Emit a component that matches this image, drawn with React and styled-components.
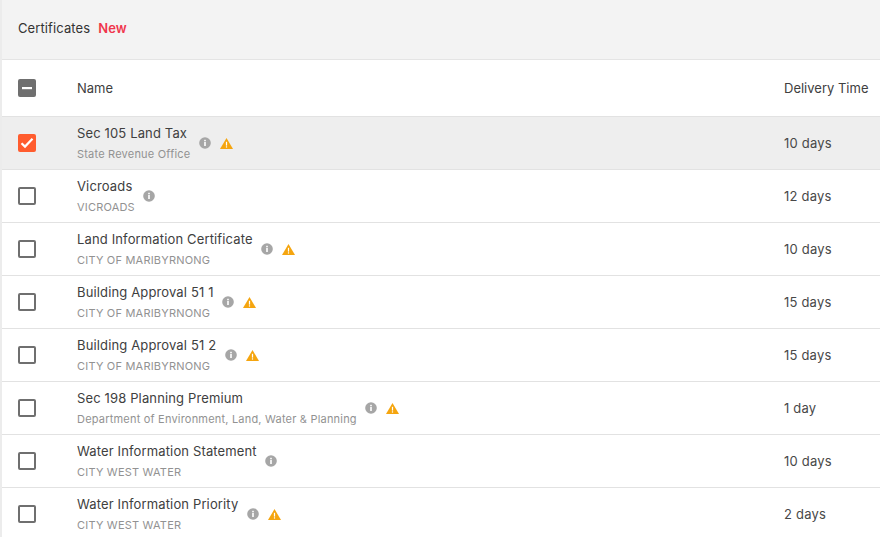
import React from 'react';
import styled, { createGlobalStyle } from 'styled-components';

const GlobalStyle = createGlobalStyle`
  html, body {
    margin: 0;
    padding: 0;
    height: 537px;
    overflow: hidden;
    background: #fff;
    font-family: Inter, "Liberation Sans", sans-serif;
  }
`;

const Panel = styled.div`
  width: 880px;
  height: 537px;
  overflow: hidden;
  box-sizing: border-box;
  border-left: 2px solid #ececec;
  color: #333;
`;

const TitleBar = styled.div`
  height: 60px;
  box-sizing: border-box;
  display: flex;
  align-items: center;
  gap: 8px;
  padding: 0 0 3px 16px;
  background: #f3f3f3;
  border-bottom: 1px solid #e4e4e4;
  font-size: 13px;
  letter-spacing: 0.1px;
`;

const NewLabel = styled.span`
  color: #f0364c;
  font-weight: 600;
`;

const Row = styled.div`
  height: 53px;
  box-sizing: border-box;
  display: grid;
  grid-template-columns: 59px 707px 1fr;
  align-items: center;
  padding-left: 16px;
  background: ${(p) => (p.$selected ? '#eeeeee' : '#fff')};
  border-bottom: 1px solid #e2e2e2;
`;

const HeaderRow = styled(Row)`
  height: 57px;
  font-size: 13px;
  color: #404040;
`;

const Box = styled.div`
  width: 18px;
  height: 18px;
  box-sizing: border-box;
  border-radius: 2px;
  display: flex;
  align-items: center;
  justify-content: center;
  background: ${(p) => p.$fill || '#fff'};
  border: 2px solid ${(p) => p.$fill || '#6f6f6f'};
`;

const NameCell = styled.div`
  display: flex;
  align-items: center;
  gap: 8.5px;
`;

const Names = styled.div`
  display: flex;
  flex-direction: column;
  gap: 6px;
`;

const Title = styled.div`
  font-size: 13px;
  line-height: 16px;
  letter-spacing: 0.14px;
  color: #404040;
`;

const Sub = styled.div`
  font-size: 11px;
  line-height: 14px;
  letter-spacing: 0.2px;
  color: #929292;
`;

const Icons = styled.div`
  display: flex;
  align-items: center;
  gap: 9px;
`;

const Time = styled.div`
  font-size: 13px;
  letter-spacing: 0.2px;
  color: #484848;
`;

const InfoIcon = () => (
  <svg width="12" height="12" viewBox="0 0 12 12">
    <circle cx="6" cy="6" r="5.8" fill="#a6a6a6" />
    <rect x="5.2" y="5" width="1.6" height="4" fill="#fff" />
    <rect x="5.2" y="2.8" width="1.6" height="1.5" fill="#fff" />
  </svg>
);

const WarnIcon = () => (
  <svg width="13" height="11" viewBox="0 0 13 11">
    <path d="M6.5 0 L13 11 L0 11 Z" fill="#f5a50f" />
    <rect x="5.9" y="3.8" width="1.2" height="3.8" fill="#fff" />
    <rect x="5.9" y="8.3" width="1.2" height="1.3" fill="#fff" />
  </svg>
);

const certificates = [
  { name: 'Sec 105 Land Tax', org: 'State Revenue Office', time: '10 days', warn: true, selected: true },
  { name: 'Vicroads', org: 'VICROADS', time: '12 days' },
  { name: 'Land Information Certificate', org: 'CITY OF MARIBYRNONG', time: '10 days', warn: true },
  { name: 'Building Approval 51 1', org: 'CITY OF MARIBYRNONG', time: '15 days', warn: true },
  { name: 'Building Approval 51 2', org: 'CITY OF MARIBYRNONG', time: '15 days', warn: true },
  { name: 'Sec 198 Planning Premium', org: 'Department of Environment, Land, Water & Planning', time: '1 day', warn: true },
  { name: 'Water Information Statement', org: 'CITY WEST WATER', time: '10 days' },
  { name: 'Water Information Priority', org: 'CITY WEST WATER', time: '2 days', warn: true },
];

export default function App() {
  return (
    <Panel>
      <GlobalStyle />
      <TitleBar>
        Certificates <NewLabel>New</NewLabel>
      </TitleBar>
      <HeaderRow>
        <Box $fill="#6f6f6f">
          <svg width="10" height="10" viewBox="0 0 10 10">
            <rect x="0" y="4" width="10" height="2.2" fill="#fff" />
          </svg>
        </Box>
        <div>Name</div>
        <div>Delivery Time</div>
      </HeaderRow>
      {certificates.map((c) => (
        <Row key={c.name} $selected={c.selected}>
          {c.selected ? (
            <Box $fill="#ff5c2e">
              <svg width="14" height="12" viewBox="0 0 14 12">
                <path d="M1.5 6.2 L5 9.6 L12.5 1.8" fill="none" stroke="#fff" strokeWidth="2.2" />
              </svg>
            </Box>
          ) : (
            <Box />
          )}
          <NameCell>
            <Names>
              <Title>{c.name}</Title>
              <Sub>{c.org}</Sub>
            </Names>
            <Icons>
              <InfoIcon />
              {c.warn && <WarnIcon />}
            </Icons>
          </NameCell>
          <Time>{c.time}</Time>
        </Row>
      ))}
    </Panel>
  );
}
